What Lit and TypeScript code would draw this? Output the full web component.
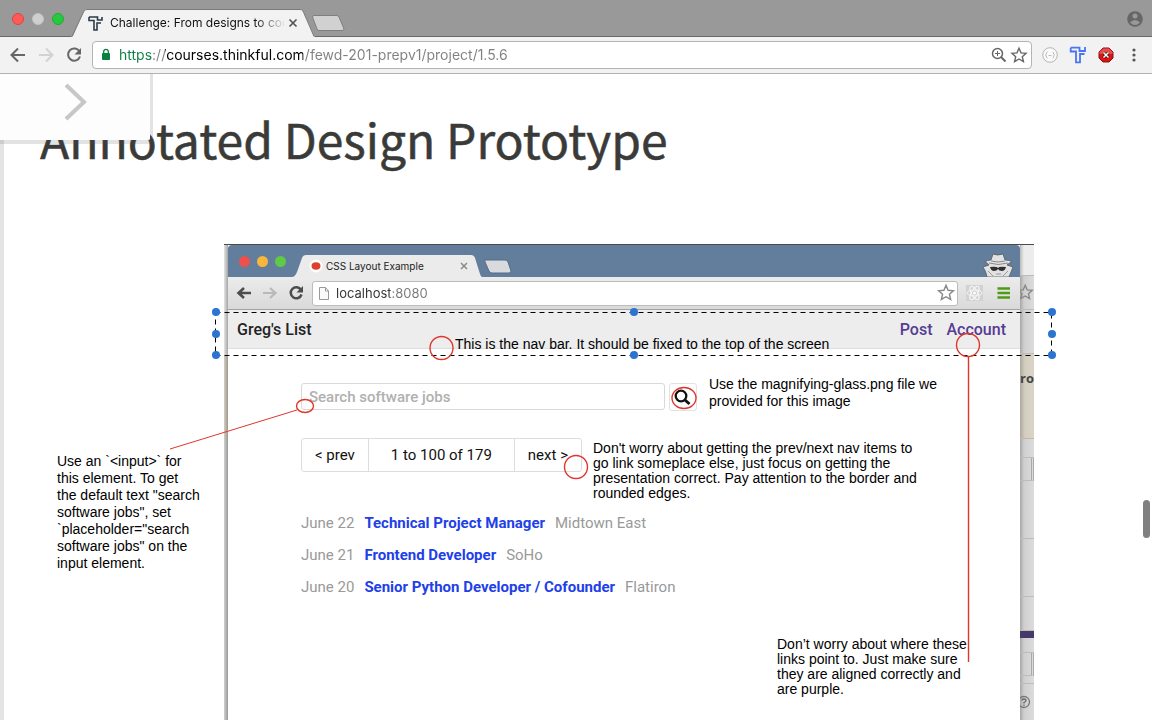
import { LitElement, html, css, svg } from "lit";
import { customElement } from "lit/decorators.js";

const backArrow = svg`<path d="M17 10H4M10 3.500L3.500 10L10 16.500" fill="none" stroke="currentColor" stroke-width="2"/>`;
const forwardArrow = svg`<path d="M3 10H16M10 3.500L16.500 10L10 16.500" fill="none" stroke="currentColor" stroke-width="2"/>`;
const reloadArrow = svg`<path d="M15.600 6.700A6.100 6.100 0 1 0 16 11.500" fill="none" stroke="currentColor" stroke-width="2"/><path d="M17 3v6.500h-6.500z" fill="currentColor"/>`;
const star = svg`<path d="M10 2.500l2.200 5.100 5.600.5-4.200 3.700 1.300 5.500-4.900-2.900-4.900 2.900 1.300-5.500-4.200-3.700 5.600-.5z" fill="none" stroke="currentColor" stroke-width="1.500"/>`;

@customElement("browser-bar")
export class BrowserBar extends LitElement {
  static styles = css`
    :host { display: block; font-family: Inter, "Open Sans", sans-serif; }
    svg { display: block; flex: none; }
    button { border: 0; padding: 0; background: none; font: inherit; color: inherit; flex: none; display: block; }
    .strip { display: flex; align-items: flex-start; height: 37px; background: #999; box-shadow: inset 0 -1px #6a6a6a; }
    .lights { display: flex; gap: 8px; padding: 13px 0 0 12px; flex: none; }
    .light { width: 12px; height: 12px; border-radius: 50%; box-sizing: border-box; }
    .close { background: #fc5b57; border: 1px solid #e2443f; }
    .idle { background: #cfcfcf; border: 1px solid #c2c2c2; }
    .grow { background: #27c840; border: 1px solid #1eae30; }
    .tab { position: relative; width: 244px; margin-left: 7px; height: 37px; flex: none; }
    .shape { position: absolute; inset: 0; }
    .tab-row { position: relative; display: flex; align-items: center; height: 28px; padding: 9px 17px 0 17px; }
    .title { flex: 1; margin: 0 4px 0 7px; font-size: 12px; line-height: 18px; white-space: nowrap; overflow: hidden; color: #111;
      -webkit-mask-image: linear-gradient(to right, #000 144px, transparent 176px); }
    .new-tab { margin-top: 14px; margin-left: -5px; }
    .who { margin: 11px 9px 0 auto; }
    .toolbar { display: flex; align-items: center; gap: 8px; padding: 4px 8px; height: 28px; background: #f2f2f2; border-bottom: 1px solid #b2b2b2; color: #666; }
    .toolbar .dim { color: #d2d2d2; }
    .address { flex: 1; min-width: 0; display: flex; align-items: center; box-sizing: border-box; height: 28px; background: #fff; border: 1px solid #b4b4b4; border-radius: 4px; padding: 0 2px 0 7px; }
    .url { flex: 1; min-width: 0; border: 0; padding: 0 0 0 7px; outline: 0; font: 14px/20px Inter, sans-serif; color: transparent;
      background: linear-gradient(to right, #0b8043 41px, #808080 41px 53px, #000 53px 191px, #808080 191px); -webkit-background-clip: text; background-clip: text; }
  `;
  render() {
    return html`
      <div class="strip">
        <div class="lights">
          <button class="light close" aria-label="Close window"></button>
          <button class="light idle" aria-label="Minimise window"></button>
          <button class="light grow" aria-label="Zoom window"></button>
        </div>
        <div class="tab">
          <svg class="shape" width="244" height="37" viewBox="0 0 244 37">
            <path d="M0 37L2 36L13 11Q14 9 16 9H229Q231 9 232 11L243 36L244 37z" fill="#f2f2f2"/>
            <path d="M1 36.500L13 11Q14 9.500 16 9.500H229Q231 9.500 232 11L243 36.500" fill="none" stroke="#7a7a7a"/>
          </svg>
          <div class="tab-row">
            <svg width="15" height="15" viewBox="0 0 15 15"><path d="M1 1H9.500V4H14V1M1 1V4.500H6V14H9V7H13" fill="none" stroke="#2d3b4a" stroke-width="1.600"/></svg>
            <span class="title">Challenge: From designs to code</span>
            <button aria-label="Close tab"><svg width="10" height="10" viewBox="0 0 10 10"><path d="M1.500 1.500l7 7m0-7l-7 7" stroke="#555" stroke-width="1.700"/></svg></button>
          </div>
        </div>
        <button class="new-tab" aria-label="New tab"><svg width="36" height="20" viewBox="0 0 36 20"><path d="M4 1.500H27Q28 1.500 29 3L34 15Q34 16.500 32 16.500H9Q8 16.500 7 15L2.500 3Q2.500 1.500 4 1.500z" fill="#d1d1d1" stroke="#7f7f7f"/></svg></button>
        <button class="who" aria-label="Profile"><svg width="16" height="16" viewBox="0 0 16 16"><circle cx="8" cy="8" r="7.800" fill="#666"/><circle cx="8" cy="5" r="2.500" fill="#999"/><path d="M3 11.500Q8 6.500 13 11.500Q8 16.500 3 11.500z" fill="#999"/></svg></button>
      </div>
      <div class="toolbar">
        <button aria-label="Back"><svg width="20" height="20">${backArrow}</svg></button>
        <button class="dim" aria-label="Forward"><svg width="20" height="20">${forwardArrow}</svg></button>
        <button aria-label="Reload"><svg width="20" height="20">${reloadArrow}</svg></button>
        <div class="address">
          <svg width="12" height="14" viewBox="0 0 12 14"><rect x="2" y="5" width="8" height="7" rx="1" fill="#0b8043"/><path d="M3.700 6V3.600a2.300 2.300 0 0 1 4.600 0V6" fill="none" stroke="#0b8043" stroke-width="1.300"/></svg>
          <input class="url" aria-label="Address" value="https://courses.thinkful.com/fewd-201-prepv1/project/1.5.6">
          <button aria-label="Zoom"><svg width="20" height="20"><circle cx="8.500" cy="8.500" r="5" fill="none" stroke="currentColor" stroke-width="1.500"/><path d="M12 12l4.500 4.500" stroke="currentColor" stroke-width="2"/><path d="M6 8.500h5M8.500 6v5" stroke="currentColor"/></svg></button>
          <button aria-label="Bookmark"><svg width="20" height="20" viewBox="-1 -1 22 22">${star}</svg></button>
        </div>
        <button aria-label="JSON viewer"><svg width="20" height="20"><circle cx="10" cy="10" r="7.300" fill="#fafafa" stroke="#b5b5b5"/><path d="M7.500 7Q6 7 6.300 9L5.500 10L6.300 11Q6 13 7.500 13M12.500 7Q14 7 13.700 9L14.500 10L13.700 11Q14 13 12.500 13M8.500 10.500h3" fill="none" stroke="#bbb"/></svg></button>
        <button aria-label="Thinkful"><svg width="20" height="20"><path d="M2.700 2.700H11.500V6H17V2M2.700 2.700V6.500H8V17.300H12V9H16.500" fill="none" stroke="#4a74f5" stroke-width="1.800"/></svg></button>
        <button aria-label="Blocker"><svg width="20" height="20"><path d="M7 3h6l4 4v6l-4 4H7l-4-4V7z" fill="#d81414" stroke="#8e1010"/><path d="M7 3.500h6l3.500 3.500v2h-13V7z" fill="#e84c4c"/><path d="M7.500 7.500l5 5m0-5l-5 5" stroke="#471010" stroke-width="3"/><path d="M7.500 7.500l5 5m0-5l-5 5" stroke="#fff" stroke-width="1.500"/></svg></button>
        <button aria-label="Menu"><svg width="20" height="20" fill="#555"><circle cx="10" cy="5" r="1.600"/><circle cx="10" cy="10" r="1.600"/><circle cx="10" cy="15" r="1.600"/></svg></button>
      </div>`;
  }
}

@customElement("jobs-window")
export class JobsWindow extends LitElement {
  static styles = css`
    :host { display: flex; flex-direction: column; background: #fff; font-family: Roboto, sans-serif; }
    svg { display: block; flex: none; }
    button { border: 0; padding: 0; background: none; font: inherit; flex: none; display: block; color: inherit; }
    a { text-decoration: none; color: inherit; }
    .strip { display: flex; align-items: flex-start; height: 32px; background: #637e9c; border-radius: 4px 4px 0 0; flex: none; overflow: hidden; }
    .lights { display: flex; gap: 7px; padding: 11px 0 0 11px; }
    .light { width: 11px; height: 11px; border-radius: 50%; }
    .red { background: #ee504b; }
    .amber { background: #f6b73c; }
    .green { background: #5fcb45; }
    .tab { position: relative; width: 190px; margin-left: 6px; flex: none; height: 32px; }
    .shape { position: absolute; inset: 0; }
    .tab-row { position: relative; display: flex; align-items: center; padding: 11px 14px 0 17px; }
    .title { flex: 1; margin-left: 3px; font: 10px/20px Inter, sans-serif; color: #222; white-space: nowrap; }
    .new-tab { margin: 14px 0 0 1px; }
    .spy { margin: 8px 6px 0 auto; }
    .toolbar { display: flex; align-items: center; height: 32px; padding: 0 6px; gap: 6px; background: linear-gradient(#ececec, #d9d9d9); border-bottom: 1px solid #a3a3a3; color: #4c4c4c; flex: none; }
    .toolbar .dim { color: #b9b9b9; }
    .address { flex: 1; min-width: 0; display: flex; align-items: center; height: 23px; background: #fff; border: 1px solid #bcbcbc; border-radius: 3px; padding: 0 1px 0 5px; }
    .url { flex: 1; min-width: 0; border: 0; padding: 0 0 0 6px; font: 13px/20px Inter, sans-serif; color: transparent;
      background: linear-gradient(to right, #333 60px, #777 60px); -webkit-background-clip: text; background-clip: text; }
    .nav { display: flex; align-items: center; justify-content: space-between; height: 38px; padding: 0 14px 0 9px; background: #ededed; border-bottom: 1px solid #dedede; font-size: 16px; font-weight: 500; flex: none; color: #222; }
    .links { display: flex; gap: 14px; color: #553c94; }
    .body { padding: 34px 73px 0; }
    .search { display: flex; gap: 4px; }
    .query { width: 364px; box-sizing: border-box; height: 27px; border: 1px solid #d9d9d9; border-radius: 3px; padding: 0 7px; font: 500 15px/20px Roboto, sans-serif; }
    .query::placeholder { color: #b0b0b0; opacity: 1; }
    .go { border: 1px solid #e2e2e2; border-radius: 3px; width: 28px; height: 28px; padding: 3px; }
    .pager { display: inline-flex; margin-top: 27px; border: 1px solid #ddd; border-radius: 3px; font-size: 15px; line-height: 32px; color: #111; }
    .cell { padding: 0 13px; }
    .count { padding: 0 22px; border: solid #ddd; border-width: 0 1px; }
    .jobs { list-style: none; margin: 35px 0 0; padding: 0; font-size: 15px; line-height: 32px; color: #999; }
    .job { display: flex; gap: 10px; }
    .role { color: #2140e8; font-weight: 700; }
  `;
  render() {
    const jobs = [
      ["June 22", "Technical Project Manager", "Midtown East"],
      ["June 21", "Frontend Developer", "SoHo"],
      ["June 20", "Senior Python Developer / Cofounder", "Flatiron"],
    ];
    return html`
      <div class="strip">
        <div class="lights"><span class="light red"></span><span class="light amber"></span><span class="light green"></span></div>
        <div class="tab">
          <svg class="shape" width="190" height="32" viewBox="0 0 190 32"><path d="M0 32Q3 32 5 27L10 13Q11 10 14 10H179Q182 10 183 13L188 29Q189 32 190 32z" fill="#ebebeb"/></svg>
          <div class="tab-row">
            <svg width="14" height="14"><circle cx="7" cy="7" r="6.500" fill="#fff"/><ellipse cx="7" cy="7" rx="4.500" ry="3.700" fill="#df402b"/></svg>
            <span class="title">CSS Layout Example</span>
            <button aria-label="Close tab"><svg width="8" height="8"><path d="M1 1l6 6m0-6l-6 6" stroke="#8a8a8a" stroke-width="1.500"/></svg></button>
          </div>
        </div>
        <button class="new-tab" aria-label="New tab"><svg width="30" height="15"><path d="M3 1H22Q24 1 25 3L28 12Q28 14 26 14H9Q7 14 6 12L2 3Q1 1 3 1z" fill="#d8dadd" stroke="#566c86"/></svg></button>
        <svg class="spy" width="32" height="24" viewBox="0 0 32 24"><path d="M5 24Q4 18 1 14L7 12Q6 10 3 9Q5 7 9 7L11 1Q15 3 21 1L23 7Q28 7 30 9Q27 10 25 12L31 14L27 24z" fill="#e2e2e2" stroke="#525a63" stroke-width=".8"/><path d="M9 8Q16 10 23 8M7 10Q16 13 26 10" fill="none" stroke="#888"/><path d="M8 14q7-1 8 1q1-2 8-1q-1 4-4 4q-3 0-4-2q-1 2-4 2q-3 0-4-4z" fill="#303030"/><path d="M14 21h5M6 18l5 5M26 18l-5 5" stroke="#999"/></svg>
      </div>
      <div class="toolbar">
        <button aria-label="Back"><svg width="20" height="20"><path d="M17 10H5M10 5L4.500 10L10 15" fill="none" stroke="currentColor" stroke-width="2.600"/></svg></button>
        <button class="dim" aria-label="Forward"><svg width="20" height="20"><path d="M3 10H15M10 5L15.500 10L10 15" fill="none" stroke="currentColor" stroke-width="2.200"/></svg></button>
        <button aria-label="Reload"><svg width="20" height="20"><path d="M15 7A5.500 5.500 0 1 0 15.500 11.500" fill="none" stroke="currentColor" stroke-width="2.500"/><path d="M17 3v6.500h-6.500z" fill="currentColor"/></svg></button>
        <div class="address">
          <svg width="12" height="15"><path d="M1.500 1.500h6l3 3.500v8.500h-9zM7.500 1.500V5h3" fill="#fafafa" stroke="#999"/></svg>
          <input class="url" aria-label="Local address" value="localhost:8080">
          <button aria-label="Bookmark page"><svg width="20" height="20" viewBox="-.5 0 21 21" color="#8a8a8a">${star}</svg></button>
        </div>
        <svg width="22" height="18"><rect x="2" y="1" width="17" height="16" fill="#d2d2d2"/><g fill="none" stroke="#f6f6f6"><ellipse cx="10.500" cy="9" rx="7.500" ry="3"/><ellipse cx="10.500" cy="9" rx="7.500" ry="3" transform="rotate(60 10.500 9)"/><ellipse cx="10.500" cy="9" rx="7.500" ry="3" transform="rotate(120 10.500 9)"/></g><circle cx="10.500" cy="9" r="1.500" fill="#fff"/></svg>
        <button aria-label="Window menu"><svg width="22" height="16"><path d="M5.500 3.500h12.500M5.500 8h12.500M5.500 12.500h12.500" stroke="#4f9b17" stroke-width="2.500"/></svg></button>
      </div>
      <nav class="nav"><span>Greg's List</span><div class="links"><a href="#post">Post</a><a href="#account">Account</a></div></nav>
      <div class="body">
        <div class="search">
          <input class="query" aria-label="Search software jobs" placeholder="Search software jobs">
          <button class="go" aria-label="Search"><svg width="20" height="20"><circle cx="8" cy="9" r="5.300" fill="none" stroke="#111" stroke-width="2.300"/><path d="M12 13l4.500 4" stroke="#111" stroke-width="3"/></svg></button>
        </div>
        <div class="pager"><a class="cell" href="#prev">&lt; prev</a><span class="count">1 to 100 of 179</span><a class="cell" href="#next">next &gt;</a></div>
        <ul class="jobs">
          ${jobs.map(([date, role, place]) => html`<li class="job"><span>${date}</span><a class="role" href="#job">${role}</a><span>${place}</span></li>`)}
        </ul>
      </div>`;
  }
}

@customElement("app-root")
export class AppRoot extends LitElement {
  static styles = css`
    :host { display: flex; flex-direction: column; height: 100vh; overflow: hidden; background: #fff; }
    .page { position: relative; flex: 1; min-height: 0; overflow: hidden; display: flex; flex-direction: column; box-shadow: inset 4px 0 #e5e5e5; padding-left: 40px; }
    .heading { margin: 28px 0 0; font: 400 48px/72px "Noto Sans CJK SC", sans-serif; color: #3a3b39; -webkit-text-stroke: 0.5px #3a3b39; white-space: nowrap; }
    .drawer { position: absolute; left: 0; top: 0; box-sizing: content-box; width: 150px; height: 66px; padding: 0; border: solid rgba(80, 80, 80, 0.16); border-width: 0 3px 4px 0; border-radius: 0 0 5px 0; background: #fdfdfd padding-box; }
    .chevron { display: block; }
    .thumb { position: absolute; right: 2px; top: 426px; width: 7px; height: 38px; border-radius: 4px; background: #808080; }
    .design { position: relative; flex: 1; display: grid; grid-template-columns: 4px 1fr 14px; max-width: 810px; margin: 70px 118px 0 184px; border-top: 1px solid #4a4a4a; }
    .edge { background: linear-gradient(to right, transparent, rgba(70, 70, 70, 0.4)), linear-gradient(#e4e4e4 110px, #d6cfc0 110px 194px, #d0d0d0 194px); }
    .behind { display: flex; flex-direction: column; overflow: hidden; background: linear-gradient(to right, #a6a6a6, #cfcfcf 4px, #dcdcdc); font: 700 13px/48px "Open Sans", sans-serif; color: #444; }
    .behind svg { display: block; }
    .slab { flex: none; box-sizing: border-box; border-bottom: 1px solid #bcbcbc; overflow: hidden; }
    .tabs { height: 31px; background: linear-gradient(to right, #bbb, #ececec 4px); }
    .tools { height: 34px; padding-top: 7px; color: #888; }
    .gap { height: 44px; }
    .notice { display: flex; justify-content: flex-end; height: 85px; background: linear-gradient(to right, #ada89d, #d4cec1 5px, #dbd5c8); border-color: #c3b9a2; }
    .short { height: 19px; }
    .box { height: 23px; border-right: 3px double #aaa; }
    .tall { height: 58px; }
    .mid { height: 34px; }
    .purple { height: 7px; background: #463a68; border: 0; }
    .step { height: 15px; }
    .last { height: 8px; }
    .help { padding-top: 11px; }
    .marks { position: absolute; left: 0; top: 0; overflow: visible; }
    .note { position: absolute; margin: 0; font: 14px/15px "Liberation Sans", Arial, sans-serif; color: #000; white-space: nowrap; }
    .loose { line-height: 17px; }
    .note-nav { left: 231px; top: 92px; }
    .note-glass { left: 485px; top: 131px; }
    .note-pager { left: 369px; top: 196px; }
    .note-input { left: -167px; top: 208px; }
    .note-links { left: 553px; top: 392px; }
  `;
  render() {
    const handles = [[-8, 67], [410, 67], [828, 67], [-8, 89], [828, 89], [-8, 110], [410, 110], [828, 110]];
    return html`
      <browser-bar></browser-bar>
      <main class="page">
        <h1 class="heading">Annotated Design Prototype</h1>
        <section class="design">
          <div class="edge"></div>
          <jobs-window></jobs-window>
          <div class="behind">
            <div class="slab tabs"></div>
            <div class="slab tools"><svg width="14" height="18" viewBox="5 0 14 20">${star}</svg></div>
            <div class="slab gap"></div>
            <div class="slab notice">pro</div>
            <div class="slab short"></div>
            <div class="slab box"></div>
            <div class="slab tall"></div>
            <div class="slab tall"></div>
            <div class="slab mid"></div>
            <div class="slab purple"></div>
            <div class="slab step"></div>
            <div class="slab box"></div>
            <div class="slab last"></div>
            <div class="help"><svg width="14" height="14"><circle cx="4" cy="7" r="5.500" fill="none" stroke="#777" stroke-width="1.300"/><path d="M2 5.500Q2 4 4 4T6 5.500Q6 6.500 4 7.500V8.500M4 9.500v1.300" fill="none" stroke="#666" stroke-width="1.300"/></svg></div>
          </div>
          <svg class="marks" width="810" height="475" fill="none">
            <rect x="-8.500" y="67.500" width="836" height="43" stroke="#000" stroke-dasharray="5 4"/>
            <g stroke="#e0352b" stroke-width="1.400">
              <circle cx="217.500" cy="103" r="11.500"/><circle cx="744" cy="100" r="11.500"/><circle cx="352" cy="222" r="11.500"/>
              <ellipse cx="81" cy="161" rx="8.500" ry="6.500"/><ellipse cx="460" cy="153" rx="12" ry="10.500"/>
              <path d="M744.500 112V417"/><path d="M-54 204L73 165" stroke-width="1"/>
            </g>
            ${handles.map(([x, y]) => svg`<circle cx=${x} cy=${y} r="4" fill="#2b74cf"/>`)}
          </svg>
          <p class="note note-nav">This is the nav bar. It should be fixed to the top of the screen</p>
          <p class="note loose note-glass">Use the magnifying-glass.png file we<br>provided for this image</p>
          <p class="note note-pager">Don't worry about getting the prev/next nav items to<br>go link someplace else, just focus on getting the<br>presentation correct. Pay attention to the border and<br>rounded edges.</p>
          <p class="note loose note-input">Use an \`&lt;input&gt;\` for<br>this element. To get<br>the default text "search<br>software jobs", set<br>\`placeholder="search<br>software jobs" on the<br>input element.</p>
          <p class="note note-links">Don’t worry about where these<br>links point to. Just make sure<br>they are aligned correctly and<br>are purple.</p>
        </section>
        <button class="drawer" aria-label="Open course menu"><svg class="chevron" width="150" height="66"><path d="M66 11L84 28L66 45" fill="none" stroke="#c6c7c9" stroke-width="4"/></svg></button>
        <div class="thumb"></div>
      </main>`;
  }
}
